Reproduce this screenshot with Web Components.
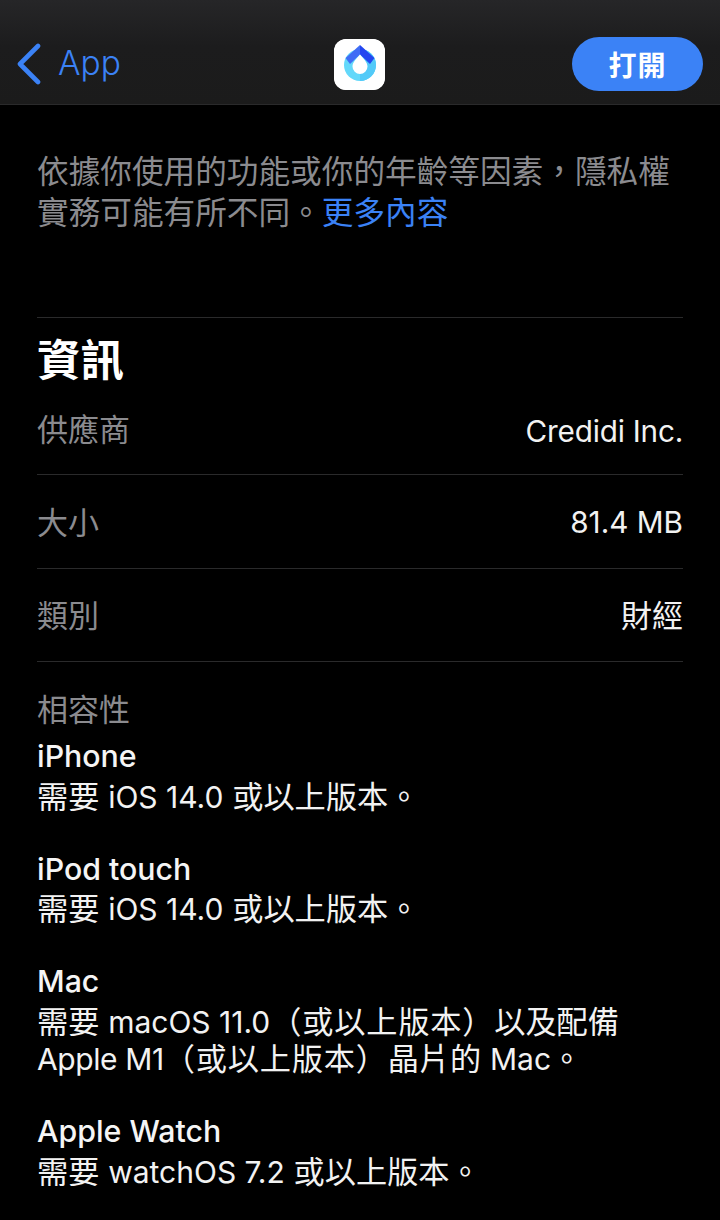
<!doctype html>
<html lang="zh-Hant"><head><meta charset="utf-8">
<style>
html,body{margin:0;background:#000;height:1220px;overflow:hidden}
body{font-family:Inter,"Noto Sans CJK TC",sans-serif;color:#fff;-webkit-font-smoothing:antialiased}
.l{font-size:30px}
.lv{font-size:29.700px;padding-top:3px;display:block}
.tight{letter-spacing:-.2px}
.m1{letter-spacing:-.4px}
.p{letter-spacing:.8px}
</style></head><body>
<template id="t-nav"><style>
:host{display:flex;box-sizing:border-box;height:105px;padding:37px 17px 13px 17px;align-items:center;justify-content:space-between;position:relative;
background:linear-gradient(#262628,#1c1c1d 45%,#1b1b1b);border-bottom:1px solid #2a2a2b}
.back{display:flex;align-items:center;gap:17px;color:#3b82f6;font-size:33.500px;width:132px;font-weight:300;line-height:40px}
.back span{display:block;margin-top:-2px}
.back svg{display:block;width:24px;height:42px}
.icon{width:51px;height:51px;border-radius:12px;background:#fff;display:block;margin-left:-2px}
.open{width:131px;height:54px;border-radius:27px;background:#3b82f6;color:#fff;display:flex;align-items:center;justify-content:center;font-size:28px;font-weight:700;letter-spacing:1px}
</style>
<div class="back"><svg viewBox="0 0 24 42"><path d="M21 3 3 21l18 18" fill="none" stroke="#3b82f6" stroke-width="4.600" stroke-linecap="round" stroke-linejoin="round"/></svg><span>App</span></div>
<svg class="icon" viewBox="0 0 51 51"><rect width="51" height="51" rx="12" fill="#fff"/>
<circle cx="26" cy="26" r="16" fill="#63d8fa"/>
<path d="M26 10a16 16 0 0 1 0 32z" fill="#52caf8"/>
<path d="M26 6 11.500 19 16 25 26 15.500z" fill="#3f6df5"/>
<path d="M26 6 40.500 19 36 25 26 15.500z" fill="#2346f0"/>
<path d="M26 15.500 C30 20 33.500 23.500 33.500 27.500a7.500 7.500 0 0 1-15 0C18.500 23.500 22 20 26 15.500z" fill="#fff"/></svg>
<div class="open">打開</div>
</template>

<template id="t-notice"><style>
:host{display:block;box-sizing:border-box;padding:47px 37px 0;font-size:31.650px;line-height:40.500px;color:#8b8b8f;height:212px}
::slotted(a){color:#3b82f6;text-decoration:none}
</style><slot></slot></template>

<template id="t-section"><style>
:host{display:block;margin:0 37px;border-top:1px solid #2a2a2b;height:157px;box-sizing:border-box}
h2{margin:0;padding-top:14px;font-size:43.500px;line-height:56px;font-weight:700;color:#fff}
</style><h2><slot name="title"></slot></h2><slot></slot></template>

<template id="t-row"><style>
:host{display:flex;justify-content:space-between;align-items:center;margin:0 37px;border-top:1px solid #2a2a2b;height:93.500px;box-sizing:border-box;font-size:31px;padding-bottom:2px}
:host([first]){margin:0;border-top:0;height:auto;padding:0;margin-top:20px;line-height:40px}
.k{color:#8b8b8f}.v{color:#f2f2f2}
</style><span class="k"><slot name="k"></slot></span><span class="v"><slot name="v"></slot></span></template>

<template id="t-compat"><style>
:host{display:block;margin:0 37px;border-top:1px solid #2a2a2b;padding-top:28px}
.h{color:#8b8b8f;font-size:31px;line-height:40px;margin-bottom:8px}
</style><div class="h"><slot name="title"></slot></div><slot></slot></template>

<template id="t-device"><style>
:host{display:block;font-size:31.200px;line-height:37.500px;color:#f2f2f2;margin-bottom:34.500px}
.n{font-weight:500;font-size:30.300px;color:#f5f5f5;margin-bottom:3px;display:block}
</style><span class="n"><slot name="name"></slot></span><slot></slot></template>

<app-nav></app-nav>
<app-notice>依據你使用的功能或你的年齡等因素，隱私權<br>實務可能有所不同。<a>更多內容</a></app-notice>
<info-section><span slot="title">資訊</span>
<info-row first><span slot="k">供應商</span><span slot="v" class="lv tight">Credidi Inc.</span></info-row></info-section>
<info-row><span slot="k">大小</span><span slot="v" class="lv">81.4 MB</span></info-row>
<info-row><span slot="k">類別</span><span slot="v">財經</span></info-row>
<compat-section><span slot="title">相容性</span>
<device-item><span slot="name">iPhone</span>需要 <span class="l">iOS 14.0</span> 或以上版本。</device-item>
<device-item><span slot="name">iPod touch</span>需要 <span class="l">iOS 14.0</span> 或以上版本。</device-item>
<device-item><span slot="name">Mac</span>需要 <span class="l">macOS 11.0</span><span class="p">（或以上版本）</span>以及配備<br><span class="l m1">Apple M1</span><span class="p">（或以上版本）</span>晶片的 <span class="l">Mac</span>。</device-item>
<device-item><span slot="name">Apple Watch</span>需要 <span class="l">watchOS 7.2</span> 或以上版本。</device-item>
</compat-section>
<script>
for(const [tag,id] of [['app-nav','t-nav'],['app-notice','t-notice'],['info-section','t-section'],['info-row','t-row'],['compat-section','t-compat'],['device-item','t-device']]){
customElements.define(tag,class extends HTMLElement{constructor(){super();this.attachShadow({mode:'open'}).appendChild(document.getElementById(id).content.cloneNode(true))}});
}
</script>
</body></html>
